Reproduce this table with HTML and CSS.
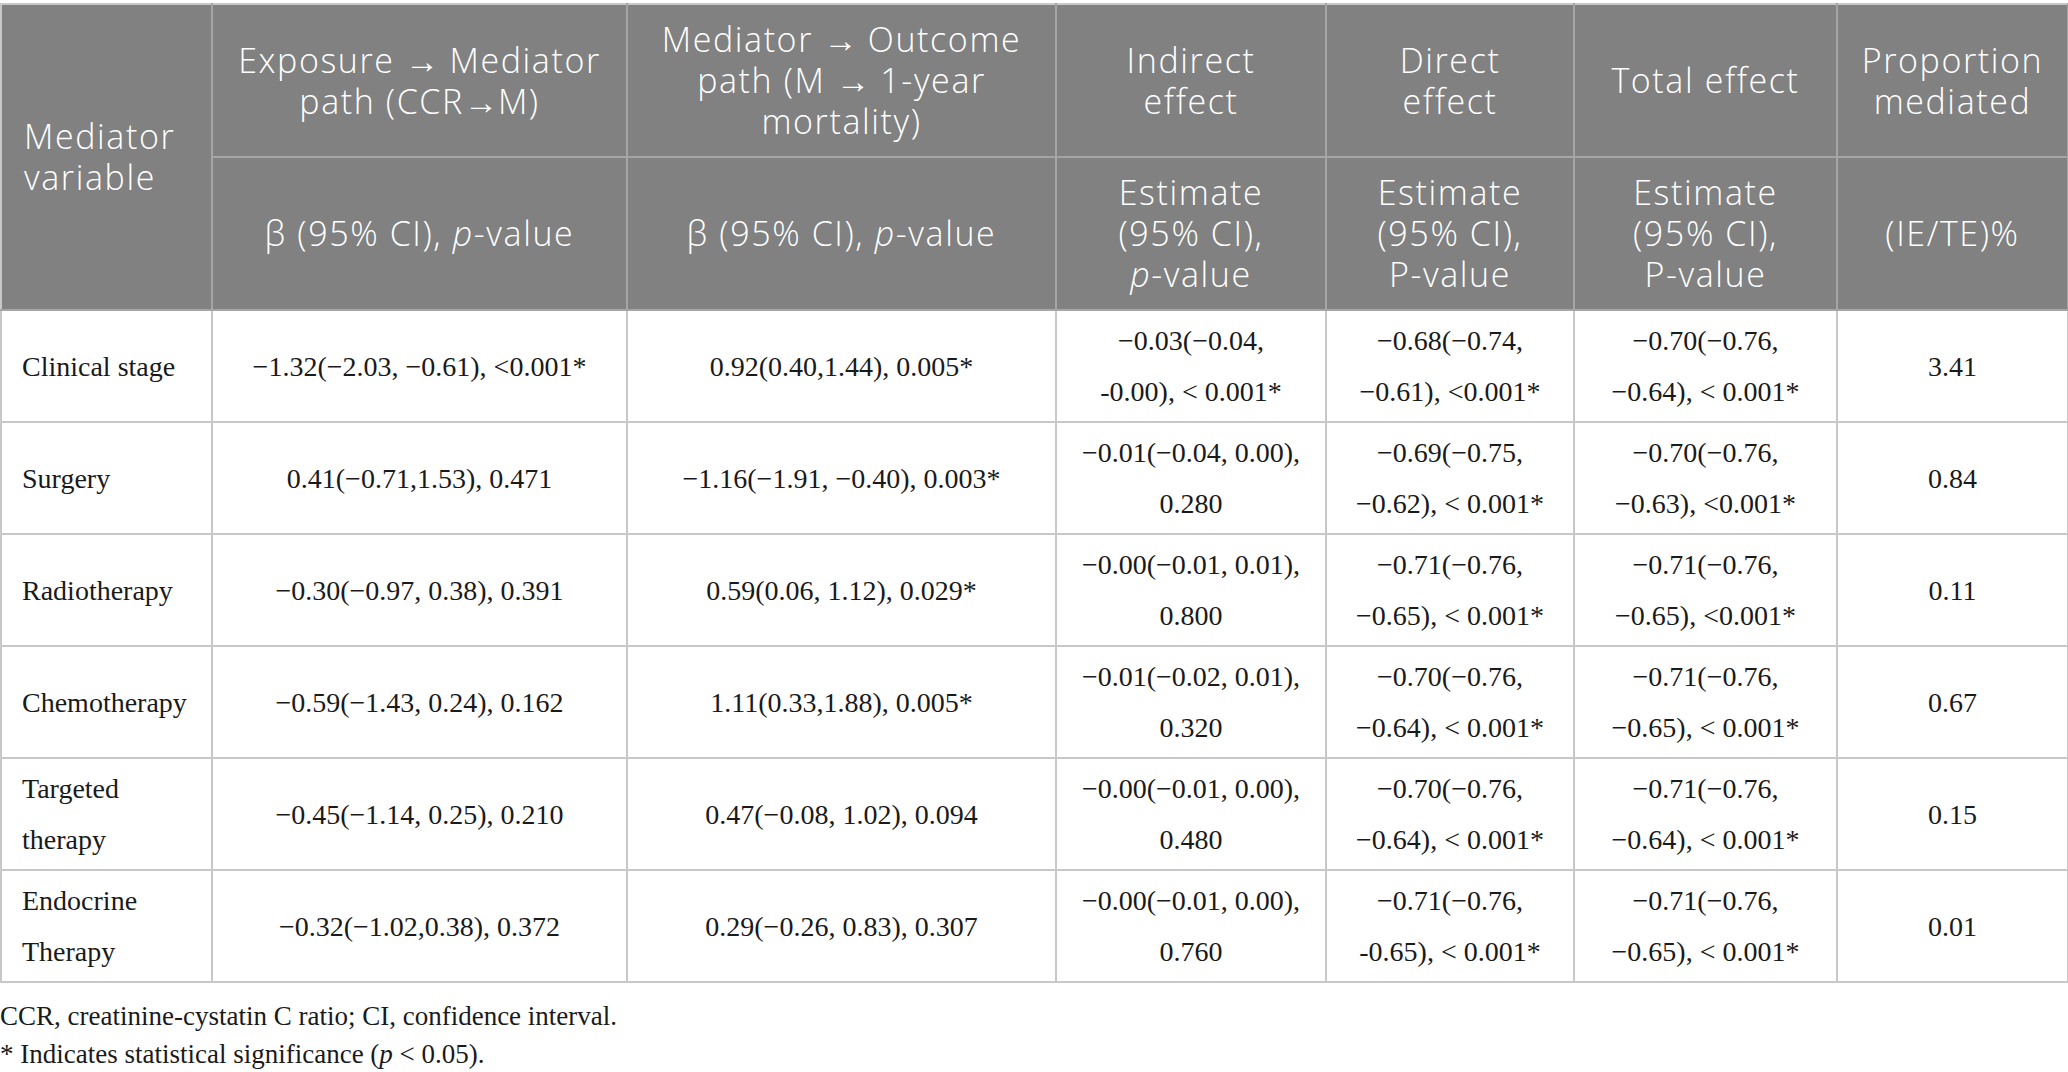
FILE: index.html
```html
<!DOCTYPE html>
<html lang="en">
<head>
<meta charset="utf-8">
<title>Mediation analysis</title>
<link rel="stylesheet" href="styles.css">
</head>
<body>
<div class="page">
<table class="med-table">
  <colgroup>
    <col class="c1"><col class="c2"><col class="c3"><col class="c4"><col class="c5"><col class="c6"><col class="c7">
  </colgroup>
  <thead>
    <tr class="hrow">
      <th rowspan="2" class="first">Mediator<br>variable</th>
      <th>Exposure <span class="arr">→</span> Mediator<br>path (CCR<span class="arr">→</span>M)</th>
      <th>Mediator <span class="arr">→</span> Outcome<br>path (M <span class="arr">→</span> 1-year<br>mortality)</th>
      <th>Indirect<br>effect</th>
      <th>Direct<br>effect</th>
      <th>Total effect</th>
      <th>Proportion<br>mediated</th>
    </tr>
    <tr class="hrow">
      <th>β (95% CI), <i>p</i>-value</th>
      <th>β (95% CI), <i>p</i>-value</th>
      <th>Estimate<br>(95% CI),<br><i>p</i>-value</th>
      <th>Estimate<br>(95% CI),<br>P-value</th>
      <th>Estimate<br>(95% CI),<br>P-value</th>
      <th>(IE/TE)%</th>
    </tr>
  </thead>
  <tbody>
    <tr class="brow">
      <td class="first">Clinical stage</td>
      <td>−1.32(−2.03, −0.61), &lt;0.001*</td>
      <td>0.92(0.40,1.44), 0.005*</td>
      <td>−0.03(−0.04,<br>-0.00), &lt; 0.001*</td>
      <td>−0.68(−0.74,<br>−0.61), &lt;0.001*</td>
      <td>−0.70(−0.76,<br>−0.64), &lt; 0.001*</td>
      <td>3.41</td>
    </tr>
    <tr class="brow">
      <td class="first">Surgery</td>
      <td>0.41(−0.71,1.53), 0.471</td>
      <td>−1.16(−1.91, −0.40), 0.003*</td>
      <td>−0.01(−0.04, 0.00),<br>0.280</td>
      <td>−0.69(−0.75,<br>−0.62), &lt; 0.001*</td>
      <td>−0.70(−0.76,<br>−0.63), &lt;0.001*</td>
      <td>0.84</td>
    </tr>
    <tr class="brow">
      <td class="first">Radiotherapy</td>
      <td>−0.30(−0.97, 0.38), 0.391</td>
      <td>0.59(0.06, 1.12), 0.029*</td>
      <td>−0.00(−0.01, 0.01),<br>0.800</td>
      <td>−0.71(−0.76,<br>−0.65), &lt; 0.001*</td>
      <td>−0.71(−0.76,<br>−0.65), &lt;0.001*</td>
      <td>0.11</td>
    </tr>
    <tr class="brow">
      <td class="first">Chemotherapy</td>
      <td>−0.59(−1.43, 0.24), 0.162</td>
      <td>1.11(0.33,1.88), 0.005*</td>
      <td>−0.01(−0.02, 0.01),<br>0.320</td>
      <td>−0.70(−0.76,<br>−0.64), &lt; 0.001*</td>
      <td>−0.71(−0.76,<br>−0.65), &lt; 0.001*</td>
      <td>0.67</td>
    </tr>
    <tr class="brow">
      <td class="first">Targeted<br>therapy</td>
      <td>−0.45(−1.14, 0.25), 0.210</td>
      <td>0.47(−0.08, 1.02), 0.094</td>
      <td>−0.00(−0.01, 0.00),<br>0.480</td>
      <td>−0.70(−0.76,<br>−0.64), &lt; 0.001*</td>
      <td>−0.71(−0.76,<br>−0.64), &lt; 0.001*</td>
      <td>0.15</td>
    </tr>
    <tr class="brow">
      <td class="first">Endocrine<br>Therapy</td>
      <td>−0.32(−1.02,0.38), 0.372</td>
      <td>0.29(−0.26, 0.83), 0.307</td>
      <td>−0.00(−0.01, 0.00),<br>0.760</td>
      <td>−0.71(−0.76,<br>-0.65), &lt; 0.001*</td>
      <td>−0.71(−0.76,<br>−0.65), &lt; 0.001*</td>
      <td>0.01</td>
    </tr>
  </tbody>
</table>
<div class="notes">
  <p>CCR, creatinine-cystatin C ratio; CI, confidence interval.</p>
  <p>* Indicates statistical significance (<i>p</i> &lt; 0.05).</p>
</div>
</div>
</body>
</html>
```

FILE: styles.css
```css
html, body {
  margin: 0;
  padding: 0;
  background: #ffffff;
}

.page {
  padding-top: 3px;
}

.med-table {
  width: 2067px;
  table-layout: fixed;
  border-collapse: collapse;
  border: 2px solid #c8c8c8;
}

.c1 { width: 211px; }
.c2 { width: 415px; }
.c3 { width: 429px; }
.c4 { width: 270px; }
.c5 { width: 248px; }
.c6 { width: 263px; }
.c7 { width: 231px; }

.med-table th {
  background: #808180;
  color: #ffffff;
  font-family: "Open Sans", "Noto Sans", sans-serif;
  font-weight: 300;
  font-size: 34px;
  letter-spacing: 1.6px;
  line-height: 41px;
  text-align: center;
  vertical-align: middle;
  padding: 14px 4px;
  border: 2px solid #a4a5a4;
}

.med-table th .arr {
  font-family: "Liberation Sans", sans-serif;
  font-weight: 400;
  letter-spacing: 0;
  font-size: 34px;
  line-height: 20px;
}

.med-table thead tr:first-child th {
  border-top-color: #c8c8c8;
}

.med-table th.first {
  text-align: left;
  padding-left: 22px;
  border-left-color: #c8c8c8;
}

.hrow {
  height: 151px;
}

.brow {
  height: 112px;
}

.med-table td {
  font-family: "Liberation Serif", "Times New Roman", serif;
  font-size: 28px;
  line-height: 51px;
  color: #1a1a1a;
  text-align: center;
  vertical-align: middle;
  padding: 4px 10px;
  border: 2px solid #c8c8c8;
}

.med-table td.first {
  text-align: left;
  padding-left: 20px;
}

.notes {
  padding-top: 14px;
  font-family: "Liberation Serif", "Times New Roman", serif;
  font-size: 27px;
  line-height: 38px;
  color: #1a1a1a;
}

.notes p {
  margin: 0;
}
```
